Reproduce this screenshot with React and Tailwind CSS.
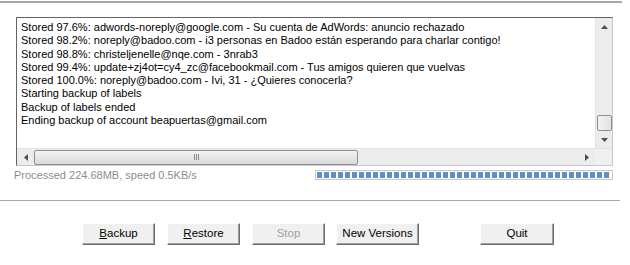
import React from "react";

const lines = [
  "Stored 97.6%: adwords-noreply@google.com - Su cuenta de AdWords: anuncio rechazado",
  "Stored 98.2%: noreply@badoo.com - i3 personas en Badoo están esperando para charlar contigo!",
  "Stored 98.8%: christeljenelle@nqe.com - 3nrab3",
  "Stored 99.4%: update+zj4ot=cy4_zc@facebookmail.com - Tus amigos quieren que vuelvas",
  "Stored 100.0%: noreply@badoo.com - Ivi, 31 - ¿Quieres conocerla?",
  "Starting backup of labels",
  "Backup of labels ended",
  "Ending backup of account beapuertas@gmail.com",
];

// small arrow glyph used by the scrollbars
function Arrow({ dir }) {
  const pts = {
    up: "0,4 3.5,0 7,4",
    down: "0,0 3.5,4 7,0",
    left: "4,0 0,3.5 4,7",
    right: "0,0 4,3.5 0,7",
  }[dir];
  const vertical = dir === "up" || dir === "down";
  return (
    <svg width={vertical ? 7 : 4} height={vertical ? 4 : 7} viewBox={vertical ? "0 0 7 4" : "0 0 4 7"}>
      <polygon points={pts} fill="#4d4d4d" />
    </svg>
  );
}

function Button({ children, disabled, className = "" }) {
  return (
    <button
      className={
        "h-[22px] bg-[#f0f0f0] border border-t-white border-l-white border-r-[#6d6d6d] border-b-[#6d6d6d] shadow-[inset_-1px_-1px_0_#a0a0a0] text-[11.5px] leading-none " +
        (disabled ? "text-[#a0a0a0] " : "text-black ") +
        className
      }
    >
      {children}
    </button>
  );
}

export default function App() {
  return (
    <div className="w-[630px] h-[265px] bg-white relative overflow-hidden font-['Liberation_Sans',Arial,sans-serif]">
      <div className="pt-[1px]">
        <div className="w-[622px] border-t-2 border-[#a8a8a8]" />
      </div>

      {/* log list */}
      <div className="ml-[16px] mt-[14px] w-[597px] h-[149px] border border-t-[#646464] border-l-[#646464] border-r-[#c8c8c8] border-b-[#c8c8c8] flex flex-col">
        <div className="flex flex-1 min-h-0">
          <div className="flex-1 overflow-hidden pl-[4px] pt-[3px] text-[11px] leading-[13.3px] text-black whitespace-nowrap">
            {lines.map((l, i) => (
              <div key={i}>{l}</div>
            ))}
          </div>
          <div className="w-[17px] bg-[#ececec] border-l border-[#e2e2e2] flex flex-col items-center">
            <div className="h-[17px] flex items-center justify-center">
              <Arrow dir="up" />
            </div>
            <div className="flex-1" />
            <div className="w-[15px] h-[16px] rounded-[2px] border border-[#8e8f8f] bg-[linear-gradient(90deg,#f3f3f3,#e2e2e2)]" />
            <div className="h-[17px] flex items-center justify-center">
              <Arrow dir="down" />
            </div>
          </div>
        </div>
        <div className="h-[17px] flex bg-[#ececec] border-t border-[#e2e2e2]">
          <div className="w-[17px] flex items-center justify-center">
            <Arrow dir="left" />
          </div>
          <div className="flex-1 flex items-center">
            <div className="w-[324px] h-[15px] rounded-[2px] border border-[#8e8f8f] bg-[linear-gradient(180deg,#f4f4f4,#d9d9d9)] flex items-center justify-center">
              <div className="flex gap-[1px]">
                <div className="w-[1px] h-[6px] bg-[#8a8a8a]" />
                <div className="w-[1px] h-[6px] bg-[#8a8a8a]" />
                <div className="w-[1px] h-[6px] bg-[#8a8a8a]" />
              </div>
            </div>
            <div className="flex-1" />
          </div>
          <div className="w-[17px] flex items-center justify-center">
            <Arrow dir="right" />
          </div>
          <div className="w-[17px] bg-[#f0f0f0]" />
        </div>
      </div>

      {/* status + progress */}
      <div className="flex items-center mt-[3px] h-[12px]">
        <div className="ml-[14px] w-[300px] text-[11px] leading-none text-[#8c8c8c]">
          Processed 224.68MB, speed 0.5KB/s
        </div>
        <div className="ml-[1px] w-[298px] h-[10px] border border-[#c8c8c8] p-[1px]">
          <div className="h-full bg-[repeating-linear-gradient(90deg,#5f8fc8_0px,#5f8fc8_5px,transparent_5px,transparent_7px)]" />
        </div>
      </div>

      <div className="mt-[19px] w-[620px] border-t border-[#a8a8a8]" />

      {/* buttons */}
      <div className="flex mt-[22px] ml-[82px]">
        <Button className="w-[73px]">
          <span className="underline">B</span>ackup
        </Button>
        <Button className="w-[73px] ml-[12px]">
          <span className="underline">R</span>estore
        </Button>
        <Button className="w-[73px] ml-[12px]" disabled>
          Stop
        </Button>
        <Button className="w-[83px] ml-[11px]">New Versions</Button>
        <Button className="w-[74px] ml-[61px]">Quit</Button>
      </div>
    </div>
  );
}
